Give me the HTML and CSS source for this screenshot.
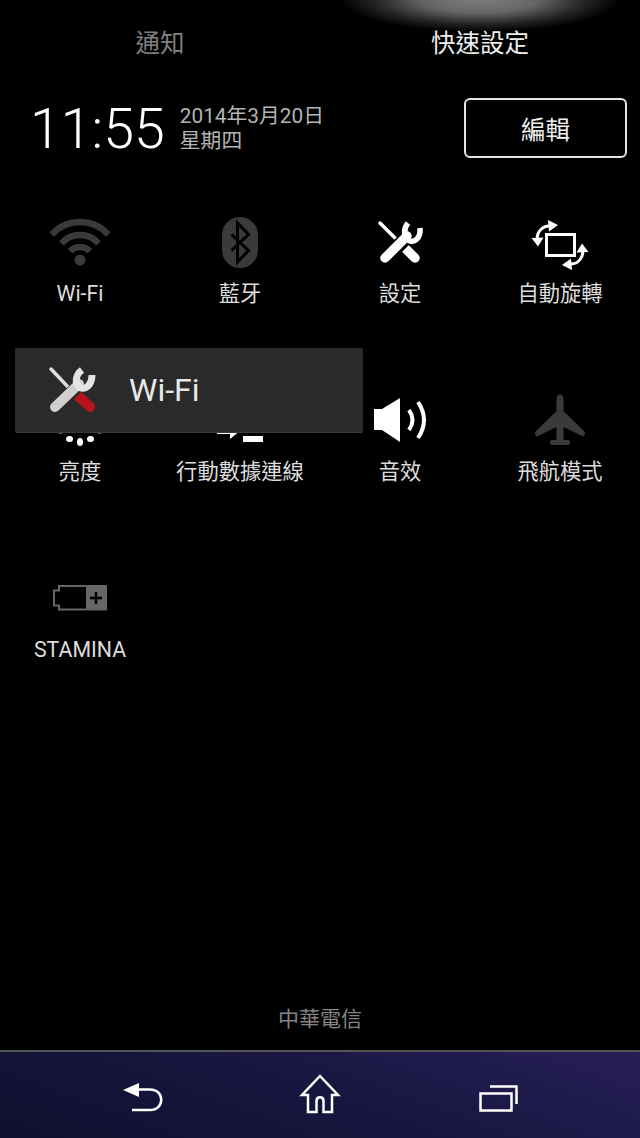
FILE: index.html
```html
<!DOCTYPE html>
<html lang="zh-Hant">
<head>
    <meta charset="UTF-8">
    <meta name="viewport" content="width=device-width, initial-scale=1.0">
    <title>快速設定</title>
    <link rel="stylesheet" href="styles.css">
</head>
<body>

    <div class="screen">
        <div class="glow"></div>

        <div class="tabs">
            <div class="tab tab-off">通知</div>
            <div class="tab">快速設定</div>
        </div>

        <div class="header">
            <div class="time">11:55</div>
            <div class="date">
                <div>2014年3月20日</div>
                <div>星期四</div>
            </div>
            <button class="edit">編輯</button>
        </div>

        <div class="grid">
            <div class="cell">
                <svg class="icon" viewBox="0 0 80 64">
                    <g fill="none" stroke="#3a3a3a" stroke-width="6.5">
                        <path d="M11.8 23.6A38 38 0 0 1 68.2 23.6"/>
                        <path d="M21.4 32.3A25 25 0 0 1 58.6 32.3"/>
                        <path d="M30.3 40.3A13 13 0 0 1 49.7 40.3"/>
                    </g>
                    <circle cx="40" cy="49" r="5.5" fill="#3a3a3a"/>
                </svg>
                <div class="label">Wi-Fi</div>
            </div>
            <div class="cell">
                <svg class="icon" viewBox="0 0 80 64">
                    <rect x="22" y="6" width="36" height="51" rx="18" fill="#3a3a3a"/>
                    <path d="M31.5 23.5L48.5 39.5L37.5 51V12L48.5 23.5L31.5 39.5" fill="none" stroke="#000" stroke-width="3"/>
                </svg>
                <div class="label">藍牙</div>
            </div>
            <div class="cell">
                <svg class="icon" viewBox="0 0 80 64">
                    <path d="M20 12L40 32" stroke="#fff" stroke-width="3.5" stroke-linecap="round"/>
                    <path d="M43 35L55 47" stroke="#fff" stroke-width="9.5" stroke-linecap="round"/>
                    <path d="M25 48L46 27" stroke="#000" stroke-width="14"/>
                    <path d="M25 47L47 25" stroke="#fff" stroke-width="9.5" stroke-linecap="round"/>
                    <path d="M48 12C43 18 44 26 48 29C54 33 61 27 60 17" fill="none" stroke="#fff" stroke-width="5.5"/>
                </svg>
                <div class="label">設定</div>
            </div>
            <div class="cell">
                <svg class="icon" viewBox="0 0 80 64">
                    <rect x="26.5" y="23.5" width="28" height="21" fill="none" stroke="#fff" stroke-width="3"/>
                    <g id="rot">
                        <path d="M17.5 29C16 22 22 15 29 15" fill="none" stroke="#fff" stroke-width="3"/>
                        <path d="M11.5 27L23.5 26.500L18 35.500Z M28 9L38 14L29 20.500Z" fill="#fff"/>
                    </g>
                    <use href="#rot" transform="rotate(180 40 34)"/>
                </svg>
                <div class="label">自動旋轉</div>
            </div>

            <div class="cell">
                <svg class="icon" viewBox="0 0 80 64">
                    <circle cx="40" cy="31" r="11" fill="#fff"/>
                    <g fill="#fff">
                        <ellipse cx="40" cy="53" rx="3" ry="4"/>
                        <ellipse cx="29.500" cy="50" rx="3.500" ry="3"/>
                        <ellipse cx="50.500" cy="50" rx="3.500" ry="3"/>
                        <ellipse cx="20.500" cy="41.500" rx="3.500" ry="3"/>
                        <ellipse cx="59.500" cy="41.500" rx="3.500" ry="3"/>
                    </g>
                </svg>
                <div class="label">亮度</div>
            </div>
            <div class="cell">
                <svg class="icon" viewBox="0 0 80 64">
                    <path d="M17 38H30V32L41 41L30 50V45H17Z" fill="#fff"/>
                    <rect x="43" y="47" width="20" height="6" fill="#fff"/>
                </svg>
                <div class="label">行動數據連線</div>
            </div>
            <div class="cell">
                <svg class="icon" viewBox="0 0 80 64">
                    <path d="M14 20H22L40 9V53L22 41H14Z" fill="#fff"/>
                    <path d="M49 21Q56 31 49 41M58 13Q70 31 58 49" fill="none" stroke="#fff" stroke-width="4"/>
                </svg>
                <div class="label">音效</div>
            </div>
            <div class="cell">
                <svg class="icon" viewBox="0 0 80 64">
                    <path d="M36.500 10C36.500 4 43.500 4 43.500 10V22L64 42C66 44 65 48 62 47L43.500 38V51H36.500V38L18 47C15 48 14 44 16 42L36.500 22Z" fill="#3a3a3a"/>
                    <rect x="30" y="51" width="20" height="5" rx="2" fill="#3a3a3a"/>
                </svg>
                <div class="label">飛航模式</div>
            </div>

            <div class="cell">
                <svg class="icon" viewBox="0 0 80 64">
                    <path d="M46 19H19V23.500H14V38.500H19V42.500H46" fill="none" stroke="#666" stroke-width="2"/>
                    <rect x="46" y="18" width="21" height="25.500" rx="1" fill="#666"/>
                    <path d="M50 31H62M56 25V37" stroke="#000" stroke-width="2.500"/>
                </svg>
                <div class="label">STAMINA</div>
            </div>
        </div>

        <div class="toast">
            <svg class="toast-icon" viewBox="0 0 48 48">
                <path d="M3 3L22 23" stroke="#ddd" stroke-width="3.500" stroke-linecap="round"/>
                <path d="M28 28L42 41" stroke="#b8141e" stroke-width="10" stroke-linecap="round"/>
                <path d="M9 41L31 19" stroke="#2a2a2a" stroke-width="13"/>
                <path d="M7 41L31 18" stroke="#d0d0d0" stroke-width="10" stroke-linecap="round"/>
                <path d="M34 4C27 9 27 17 31 21C36 25 44 20 44 9" fill="none" stroke="#e4e4e4" stroke-width="7"/>
            </svg>
            <div class="toast-text">Wi-Fi</div>
        </div>

        <div class="carrier">中華電信</div>

        <div class="nav">
            <div class="nav-btn">
                <svg viewBox="0 0 60 60" class="nav-icon">
                    <path d="M10 22L26 15V29Z" fill="#fff"/>
                    <path d="M24 21.500H37C52 21.500 52 42 37 42H19" fill="none" stroke="#fff" stroke-width="2.500"/>
                </svg>
            </div>
            <div class="nav-btn">
                <svg viewBox="0 0 60 60" class="nav-icon">
                    <path d="M30 8L48 27H42V44H33.500V33C33.500 28 26.500 28 26.500 33V44H18V27H12Z" fill="none" stroke="#fff" stroke-width="2.500"/>
                </svg>
            </div>
            <div class="nav-btn">
                <svg viewBox="0 0 60 60" class="nav-icon">
                    <rect x="13.500" y="25.500" width="31" height="17" fill="none" stroke="#fff" stroke-width="2.500"/>
                    <path d="M23 18.500H49.500V36" fill="none" stroke="#fff" stroke-width="2.500"/>
                </svg>
            </div>
        </div>
    </div>

</body>
</html>
```

FILE: styles.css
```css
* {
    box-sizing: border-box;
}
html, body {
    margin: 0;
    height: 100%;
    background: #000;
}
body {
    font-family: Roboto, "Noto Sans CJK TC", sans-serif;
    color: #e8e8e8;
}
.screen {
    position: relative;
    display: flex;
    flex-direction: column;
    height: 100vh;
    overflow: hidden;
}
.glow {
    position: absolute;
    top: 0;
    left: 340px;
    width: 280px;
    height: 34px;
    background: radial-gradient(ellipse 140px 32px at 50% 0, #7c7c7c 0%, #666 40%, rgba(60, 60, 60, 0.6) 75%, rgba(0, 0, 0, 0) 100%);
}
.tabs {
    display: flex;
    height: 86px;
}
.tab {
    width: 320px;
    line-height: 88px;
    text-align: center;
    font-size: 24.5px;
    color: #eee;
}
.tab-off {
    color: #808080;
}
.header {
    display: flex;
    align-items: center;
    height: 125px;
    padding: 0 13px 41px 30px;
}
.time {
    margin-top: 4px;
    font-size: 55.5px;
    font-weight: 300;
    line-height: 60px;
    color: #fff;
}
.date {
    margin-left: 15px;
    margin-top: 2px;
    font-size: 20.8px;
    line-height: 25px;
    color: #b4b4b4;
}
.edit {
    width: 163px;
    height: 60px;
    margin-left: auto;
    background: #000;
    border: 2px solid #e4e4e4;
    border-radius: 6px;
    color: #f0f0f0;
    font-family: inherit;
    font-size: 24.5px;
}
.grid {
    display: grid;
    grid-template-columns: repeat(4, 160px);
    grid-auto-rows: 178px;
}
.cell {
    display: flex;
    flex-direction: column;
    align-items: center;
}
.icon {
    width: 80px;
    height: 64px;
}
.label {
    height: 36px;
    line-height: 38px;
    font-size: 21.3px;
    color: #ddd;
}
.toast {
    position: absolute;
    top: 348px;
    left: 15px;
    display: flex;
    align-items: center;
    width: 348px;
    height: 85px;
    padding-left: 33px;
    background: #2a2a2a;
    border-bottom: 1px solid #3a3a3a;
    border-radius: 2px;
}
.toast-icon {
    width: 48px;
    height: 48px;
}
.toast-text {
    margin-left: 33px;
    font-size: 32px;
    color: #e8e8e8;
}
.carrier {
    margin-top: auto;
    margin-bottom: 11px;
    line-height: 40px;
    text-align: center;
    font-size: 21px;
    color: #858585;
}
.nav {
    display: flex;
    justify-content: center;
    height: 88px;
    padding-top: 16px;
    border-top: 2px solid #555;
    background: linear-gradient(20deg, #0f1030 0%, #17163f 50%, #271f58 100%);
}
.nav-btn {
    display: flex;
    justify-content: center;
    width: 177px;
}
.nav-icon {
    width: 60px;
    height: 60px;
}
```
